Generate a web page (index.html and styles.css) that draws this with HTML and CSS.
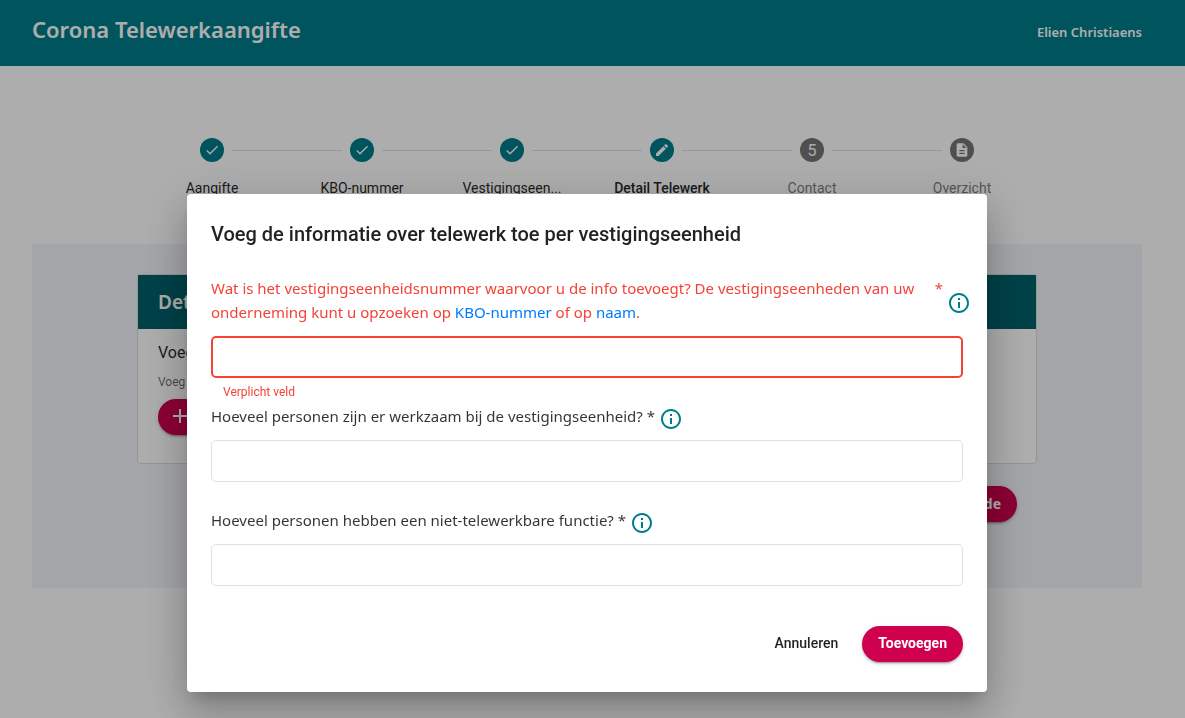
FILE: index.html
```html
<!DOCTYPE html>
<html lang="nl">
<head>
    <meta charset="UTF-8">
    <meta name="viewport" content="width=device-width, initial-scale=1.0">
    <title>Corona Telewerkaangifte</title>
    <link rel="stylesheet" href="styles.css">
</head>
<body>
    <svg class="sprite" aria-hidden="true">
        <symbol id="icon-check" viewBox="0 0 24 24">
            <path d="M9 16.17L4.83 12l-1.42 1.41L9 19 21 7l-1.41-1.41z"/>
        </symbol>
        <symbol id="icon-edit" viewBox="0 0 24 24">
            <path d="M3 17.25V21h3.75L17.81 9.94l-3.75-3.75L3 17.25zM20.71 7.04a1 1 0 0 0 0-1.41l-2.34-2.34a1 1 0 0 0-1.41 0l-1.83 1.83 3.75 3.75 1.83-1.83z"/>
        </symbol>
        <symbol id="icon-document" viewBox="0 0 24 24">
            <path d="M14 2H6c-1.1 0-2 .9-2 2v16c0 1.1.9 2 2 2h12c1.1 0 2-.9 2-2V8l-6-6zm2 16H8v-2h8v2zm0-4H8v-2h8v2zm-3-5V3.500L18.500 9H13z"/>
        </symbol>
        <symbol id="icon-add" viewBox="0 0 24 24">
            <path d="M19 13h-6v6h-2v-6H5v-2h6V5h2v6h6v2z"/>
        </symbol>
        <symbol id="icon-info" viewBox="0 0 24 24">
            <path d="M11 7h2v2h-2zm0 4h2v6h-2zm1-9C6.480 2 2 6.480 2 12s4.480 10 10 10 10-4.480 10-10S17.520 2 12 2zm0 18c-4.410 0-8-3.590-8-8s3.590-8 8-8 8 3.590 8 8-3.590 8-8 8z"/>
        </symbol>
    </svg>

    <header class="topbar">
        <h1 class="app-title">Corona Telewerkaangifte</h1>
        <span class="user">Elien Christiaens</span>
    </header>

    <main>
        <ol class="stepper">
            <li class="step done">
                <div class="step-line"><span class="step-icon"><svg><use href="#icon-check"/></svg></span></div>
                <span class="step-label">Aangifte</span>
            </li>
            <li class="step done">
                <div class="step-line"><span class="step-icon"><svg><use href="#icon-check"/></svg></span></div>
                <span class="step-label">KBO-nummer</span>
            </li>
            <li class="step done">
                <div class="step-line"><span class="step-icon"><svg><use href="#icon-check"/></svg></span></div>
                <span class="step-label">Vestigingseen...</span>
            </li>
            <li class="step active">
                <div class="step-line"><span class="step-icon"><svg><use href="#icon-edit"/></svg></span></div>
                <span class="step-label">Detail Telewerk</span>
            </li>
            <li class="step">
                <div class="step-line"><span class="step-icon">5</span></div>
                <span class="step-label">Contact</span>
            </li>
            <li class="step">
                <div class="step-line"><span class="step-icon"><svg><use href="#icon-document"/></svg></span></div>
                <span class="step-label">Overzicht</span>
            </li>
        </ol>

        <section class="panel">
            <div class="panel-inner">
                <div class="card">
                    <h2 class="card-title">Detail Telewerk</h2>
                    <div class="card-body">
                        <p class="card-text">Voeg de informatie toe</p>
                        <p class="card-hint">Voeg een vestigingseenheid toe</p>
                        <button type="button" class="btn btn-primary btn-add"><svg><use href="#icon-add"/></svg>Toevoegen</button>
                    </div>
                </div>
                <div class="panel-actions">
                    <button type="button" class="btn btn-primary btn-next">Volgende</button>
                </div>
            </div>
        </section>
    </main>

    <div class="overlay">
        <div class="dialog" role="dialog" aria-modal="true" aria-labelledby="dialog-title">
            <h2 id="dialog-title" class="dialog-title">Voeg de informatie over telewerk toe per vestigingseenheid</h2>
            <form>
                <div class="field invalid">
                    <div class="field-head">
                        <label for="unit">Wat is het vestigingseenheidsnummer waarvoor u de info toevoegt? De vestigingseenheden van uw onderneming kunt u opzoeken op <a href="#">KBO-nummer</a> of op <a href="#">naam</a>.</label>
                        <span class="required">*</span>
                        <svg class="info"><use href="#icon-info"/></svg>
                    </div>
                    <input type="text" id="unit" aria-describedby="unit-error">
                    <div class="field-error" id="unit-error">Verplicht veld</div>
                </div>
                <div class="field">
                    <div class="field-head">
                        <label for="employees">Hoeveel personen zijn er werkzaam bij de vestigingseenheid? *</label>
                        <svg class="info"><use href="#icon-info"/></svg>
                    </div>
                    <input type="text" id="employees">
                    <div class="field-error"></div>
                </div>
                <div class="field">
                    <div class="field-head">
                        <label for="onsite">Hoeveel personen hebben een niet-telewerkbare functie? *</label>
                        <svg class="info"><use href="#icon-info"/></svg>
                    </div>
                    <input type="text" id="onsite">
                    <div class="field-error"></div>
                </div>
                <div class="dialog-actions">
                    <button type="button" class="btn">Annuleren</button>
                    <button type="submit" class="btn btn-primary">Toevoegen</button>
                </div>
            </form>
        </div>
    </div>
</body>
</html>
```

FILE: styles.css
```css
*{
    margin: 0;
    padding: 0;
    box-sizing: border-box;
}

body{
    background-color: #fff;
    color: rgba(0,0,0,.87);
    font-family: Roboto, "Helvetica Neue", sans-serif;
    font-size: 14px;
    overflow: hidden;
}

svg{
    fill: currentColor;
}

.sprite{
    display: none;
}

.topbar{
    display: flex;
    justify-content: space-between;
    align-items: center;
    height: 66px;
    padding: 0 43px 0 32px;
    background-color: #007d8a;
    color: #fff;
    font-family: "Segoe UI", "Noto Sans", sans-serif;
}

.app-title{
    font-size: 22px;
    font-weight: 600;
    line-height: 32px;
    padding-bottom: 8px;
}

.user{
    font-size: 13px;
    font-weight: 600;
    line-height: 20px;
    padding-bottom: 2px;
}

main{
    padding: 72px 43px 0 32px;
}

.stepper{
    display: flex;
    max-width: 900px;
    margin: 0 auto;
    list-style: none;
}

.step{
    flex: 1;
    text-align: center;
    color: rgba(0,0,0,.54);
}

.step-line{
    display: flex;
    align-items: center;
    margin-bottom: 16px;
}

.step-line::before,
.step-line::after{
    content: "";
    flex: 1;
    height: 1px;
    background-color: rgba(0,0,0,.12);
}

.step:first-child .step-line::before,
.step:last-child .step-line::after{
    background-color: transparent;
}

.step-icon{
    display: flex;
    justify-content: center;
    align-items: center;
    width: 24px;
    height: 24px;
    margin: 0 8px;
    border-radius: 50%;
    background-color: #757575;
    color: #fff;
    font-size: 16px;
}

.step-icon svg{
    width: 16px;
    height: 16px;
}

.done .step-icon,
.active .step-icon{
    background-color: #007d8a;
}

.step-label{
    line-height: 20px;
}

.done .step-label{
    color: rgba(0,0,0,.87);
}

.active .step-label{
    color: rgba(0,0,0,.87);
    font-weight: 500;
}

.panel{
    margin-top: 46px;
    padding: 30px 0 66px;
    background-color: #f2f4f9;
}

.panel-inner{
    max-width: 900px;
    margin: 0 auto;
}

.card{
    min-height: 190px;
    border: 1px solid #dcdcdc;
    border-radius: 4px;
    background-color: #fff;
}

.card-title{
    height: 54px;
    padding: 0 20px;
    background-color: #00606b;
    color: #fff;
    font-family: "Segoe UI", "Noto Sans", sans-serif;
    font-size: 19px;
    font-weight: 600;
    line-height: 54px;
}

.card-body{
    padding: 12px 20px;
}

.card-text{
    font-size: 16px;
    line-height: 24px;
}

.card-hint{
    margin: 8px 0;
    color: rgba(0,0,0,.6);
    font-size: 12px;
    line-height: 18px;
}

.panel-actions{
    display: flex;
    justify-content: flex-end;
    padding: 22px 20px 0;
}

.btn{
    height: 36px;
    padding: 0 16px 2px;
    border: none;
    border-radius: 18px;
    background-color: transparent;
    color: rgba(0,0,0,.87);
    font-family: inherit;
    font-size: 14px;
    font-weight: 500;
    cursor: pointer;
}

.btn-primary{
    background-color: #cf004e;
    color: #fff;
    font-weight: 700;
    box-shadow: 0 3px 1px -2px rgba(0,0,0,.2), 0 2px 2px 0 rgba(0,0,0,.14), 0 1px 5px 0 rgba(0,0,0,.12);
}

.btn-add{
    display: flex;
    align-items: center;
    padding: 0 16px 2px 10px;
}

.btn-add svg{
    width: 24px;
    height: 24px;
}

.btn-next{
    font-family: "Segoe UI", "Noto Sans", sans-serif;
}

.overlay{
    position: fixed;
    inset: 0;
    display: flex;
    justify-content: center;
    align-items: flex-start;
    padding: 194px 11px 0 0;
    background-color: rgba(0,0,0,.32);
}

.dialog{
    width: 100%;
    max-width: 800px;
    padding: 24px 24px 30px;
    border-radius: 4px;
    background-color: #fff;
    box-shadow: 0 11px 15px -7px rgba(0,0,0,.2), 0 24px 38px 3px rgba(0,0,0,.14), 0 9px 46px 8px rgba(0,0,0,.12);
}

.dialog-title{
    margin-bottom: 26px;
    font-size: 20px;
    font-weight: 500;
    line-height: 32px;
}

.field-head{
    display: flex;
    align-items: center;
    margin-bottom: 12px;
    color: rgba(0,0,0,.8);
    font-family: "Segoe UI", "Noto Sans", sans-serif;
    font-size: 15px;
    line-height: 24px;
}

.field-head a{
    color: #007bff;
    text-decoration: none;
}

.required{
    align-self: flex-start;
    margin-left: 8px;
}

.info{
    flex: none;
    width: 24px;
    height: 24px;
    margin: 3px 0 -3px 4px;
    color: #007d8a;
}

.field input{
    display: block;
    width: 100%;
    height: 42px;
    padding: 0 12px;
    border: 1px solid #e0e0e0;
    border-radius: 5px;
    font-family: inherit;
    font-size: 16px;
    outline: none;
}

.field-error{
    height: 26px;
    padding: 6px 12px 0;
    color: #f44336;
    font-size: 12px;
    line-height: 16px;
}

.invalid .field-head{
    color: #f44336;
}

.invalid label{
    flex: 1;
}

.invalid .info{
    margin-right: -8px;
}

.invalid input{
    border: 2px solid #f44336;
}

.dialog-actions{
    display: flex;
    justify-content: flex-end;
    gap: 8px;
    margin-top: 14px;
}
```
